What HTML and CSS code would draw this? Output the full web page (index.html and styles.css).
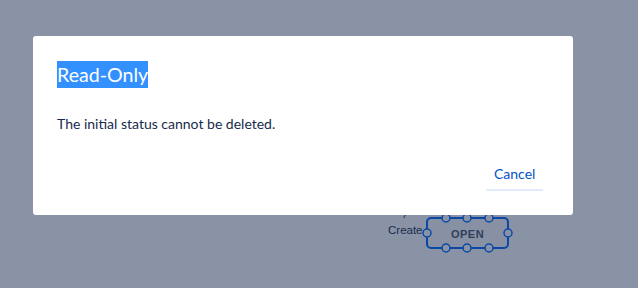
FILE: index.html
```html
<!DOCTYPE html>
<html>
<head>
<meta charset="utf-8">
<link rel="stylesheet" href="styles.css">
</head>
<body>
<div class="canvas">
  <svg class="diagram" width="638" height="288" viewBox="0 0 638 288">
    <path d="M404 218 Q404 214 410 213 L420 213" fill="none" stroke="#172b4d" stroke-width="1"/>
    <text x="388" y="234" class="lbl">Create</text>
    <rect x="427" y="218" width="81" height="30" rx="4" ry="4" fill="#8891a3" stroke="#0b48a6" stroke-width="2"/>
    <text x="467.5" y="237.5" text-anchor="middle" class="node">OPEN</text>
    <g fill="#8a93a5" stroke="#0b48a6" stroke-width="1.5">
      <circle cx="446" cy="218" r="4"/>
      <circle cx="467" cy="218" r="4"/>
      <circle cx="489" cy="218" r="4"/>
      <circle cx="446" cy="248" r="4"/>
      <circle cx="467" cy="248" r="4"/>
      <circle cx="489" cy="248" r="4"/>
      <circle cx="427" cy="233" r="4"/>
      <circle cx="508" cy="233" r="4"/>
    </g>
  </svg>
  <div class="dialog">
    <h1 class="title"><span class="sel">Read-Only</span></h1>
    <p class="body">The initial status cannot be deleted.</p>
    <div class="footer">
      <button class="btn">Cancel</button>
    </div>
  </div>
</div>
</body>
</html>
```
FILE: styles.css
```css
html, body {
  margin: 0;
  padding: 0;
  background: #8a93a5;
}
.canvas {
  position: relative;
  width: 638px;
  height: 288px;
  overflow: hidden;
  font-family: Lato, "Noto Sans", sans-serif;
}
.diagram {
  position: absolute;
  left: 0;
  top: 0;
}
.lbl {
  font-family: "Liberation Sans", Arial, sans-serif;
  font-size: 11.5px;
  fill: #172b4d;
}
.node {
  font-family: "Liberation Sans", Arial, sans-serif;
  font-size: 11px;
  font-weight: bold;
  letter-spacing: 0.5px;
  fill: #2d3f5e;
}
.dialog {
  position: absolute;
  left: 33px;
  top: 36px;
  width: 540px;
  height: 179px;
  box-sizing: border-box;
  background: #fff;
  border-radius: 3px;
  padding: 25px 30px 24px 24px;
  display: flex;
  flex-direction: column;
}
.title {
  margin: 0;
  font-size: 19.6px;
  font-weight: normal;
  line-height: 27px;
  height: 27px;
}
.sel {
  background: #3390ff;
  color: #fff;
  display: inline-block;
  line-height: 27px;
}
.body {
  margin: 26px 0 0;
  font-size: 14px;
  line-height: 20px;
  color: #172b4d;
}
.footer {
  margin-top: auto;
  display: flex;
  justify-content: flex-end;
}
.btn {
  font-family: inherit;
  font-size: 14px;
  color: #0052cc;
  background: transparent;
  border: none;
  border-bottom: 2px solid #e2ecfb;
  padding: 0 8px;
  width: 57px;
  height: 32px;
  line-height: 30px;
}
```
